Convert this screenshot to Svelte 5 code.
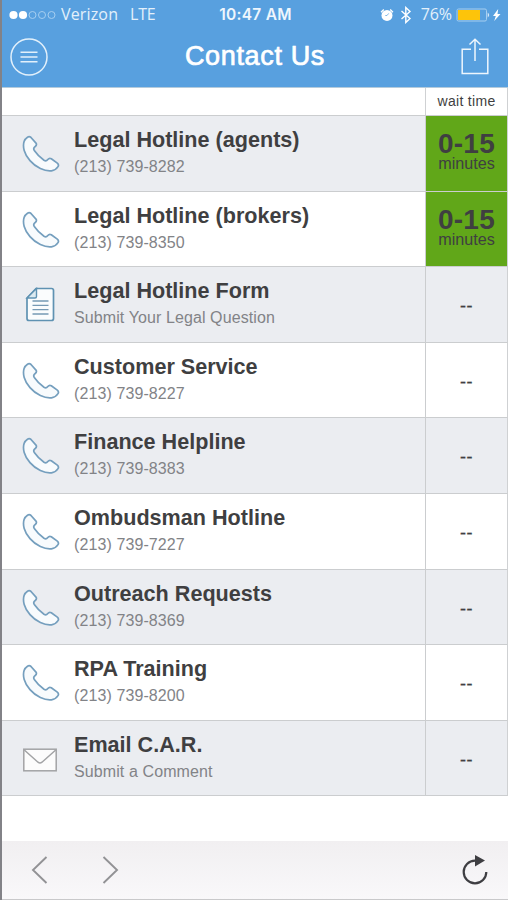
<script>
  const rows = [
    { title: 'Legal Hotline (agents)', sub: '(213) 739-8282', icon: 'phone', wait: '0-15' },
    { title: 'Legal Hotline (brokers)', sub: '(213) 739-8350', icon: 'phone', wait: '0-15' },
    { title: 'Legal Hotline Form', sub: 'Submit Your Legal Question', icon: 'form' },
    { title: 'Customer Service', sub: '(213) 739-8227', icon: 'phone' },
    { title: 'Finance Helpline', sub: '(213) 739-8383', icon: 'phone' },
    { title: 'Ombudsman Hotline', sub: '(213) 739-7227', icon: 'phone' },
    { title: 'Outreach Requests', sub: '(213) 739-8369', icon: 'phone' },
    { title: 'RPA Training', sub: '(213) 739-8200', icon: 'phone' },
    { title: 'Email C.A.R.', sub: 'Submit a Comment', icon: 'mail' }
  ];
</script>

<div class="screen">
  <header>
    <div class="status">
      <div class="left">
        <svg class="signal" width="48" height="10" viewBox="0 0 48 10">
          <circle cx="4.5" cy="5" r="4.1" fill="#fff" />
          <circle cx="14" cy="5" r="4.1" fill="#fff" />
          <g fill="none" stroke="#a5cef0" stroke-width="1">
            <circle cx="23.5" cy="5" r="3.5" />
            <circle cx="33" cy="5" r="3.5" />
            <circle cx="42.5" cy="5" r="3.5" />
          </g>
        </svg>
        <span class="carrier">Verizon</span>
        <span class="net">LTE</span>
      </div>
      <span class="time">10:47 AM</span>
      <div class="right">
        <svg width="14" height="14" viewBox="0 0 14 14">
          <circle cx="7" cy="7.4" r="5.5" fill="#fff" />
          <path d="M1 4.2L3.8 1.6M13 4.2L10.2 1.6" stroke="#fff" stroke-width="1.3" />
          <path d="M5.3 7.5H7L8.7 5.4" fill="none" stroke="#76b1e4" stroke-width=".9" />
        </svg>
        <svg class="bt" width="12" height="18" viewBox="0 0 12 18">
          <path d="M1.5 5L10 12.6L5.8 16.5V1.5L10 5.4L1.5 13" fill="none" stroke="#fff" stroke-width="1.4" />
        </svg>
        <span class="pct">76%</span>
        <svg width="46" height="14" viewBox="0 0 46 14">
          <rect x="1" y="1" width="29.5" height="12" rx="1.5" fill="none" stroke="#a5cef0" />
          <rect x="2" y="2" width="22" height="10" fill="#fdc40a" />
          <path d="M31.7 4.5q3 2.5 0 5z" fill="#d5e8f8" />
          <path d="M42.2 1L37 8h2.8l-1.6 5L44.5 6h-3z" fill="#fff" />
        </svg>
      </div>
    </div>
    <div class="nav">
      <svg class="menu" width="38" height="38" viewBox="0 0 38 38" fill="none" stroke="#e2f0fb">
        <circle cx="19" cy="19" r="18" stroke-width="1.5" />
        <path d="M10.5 14.2h17M10.5 19h17M10.5 23.8h17" stroke-width="1.6" />
      </svg>
      <h1>Contact Us</h1>
      <svg class="share" width="28" height="38" viewBox="0 0 28 38" fill="none" stroke="#eef6fd" stroke-width="1.5">
        <path d="M10 11.2H1.2V35.6H26.8V11.2H18M14 23V1.5M8.5 6.5L14 1.2L19.5 6.5" />
      </svg>
    </div>
  </header>

  <main>
    <div class="head"><span></span><span class="label">wait time</span></div>
    {#each rows as row}
      <div class="row">
        <div class="contact">
          <div class="icon">
            {#if row.icon === 'phone'}
              <svg class="phone" width="38" height="38" viewBox="0 0 38 38">
                <path d="M5.5 2.2Q7.3 1 9 2.5L14.2 8.4Q15 10 13.2 11.5Q10.8 13.3 12.3 15.5Q16.2 21.2 22 25.3Q24.2 26.7 25.8 24.5Q27.3 22.6 29.3 23.7L35.3 28.1Q37.2 29.7 36 31.6Q33.8 35.2 29.5 35.8C22.5 36.5 14 32.5 8 25.6C2 19 .5 11.5 2.1 6.5Q3 3.8 5.5 2.2Z" fill="#f8fbfd" stroke="#759fbe" stroke-width="1.7" stroke-linejoin="round" />
              </svg>
            {:else if row.icon === 'form'}
              <svg class="form" width="30" height="36" viewBox="0 0 30 36" fill="none" stroke="#5f92b2">
                <path d="M11 1.5H26.5Q28.5 1.5 28.5 3.5V31.5Q28.5 33.5 26.5 33.5H4Q2 33.5 2 31.5V11Z" fill="#fafcfd" stroke-width="1.7" />
                <path d="M11.5 1.5V9.5Q11.5 11 10 11H2Z" fill="#dceaf0" stroke-width="1.4" />
                <path d="M7.5 14h16M7.5 18.3h16M7.5 22.6h16M7.5 27h16" stroke="#7699b4" stroke-width="1.3" />
              </svg>
            {:else}
              <svg class="mail" width="34" height="24" viewBox="0 0 34 24" fill="#fcfcfc" stroke="#a2a3a5" stroke-width="1.5">
                <rect x=".8" y="1.2" width="32.4" height="21.6" />
                <path d="M1.3 2L15 14.2Q17 15.7 19 14.2L32.7 2" />
              </svg>
            {/if}
          </div>
          <div class="text">
            <div class="title">{row.title}</div>
            <div class="sub">{row.sub}</div>
          </div>
        </div>
        <div class="wait" class:green={row.wait}>
          {#if row.wait}
            <b>{row.wait}</b><span>minutes</span>
          {:else}
            <span class="none">--</span>
          {/if}
        </div>
      </div>
    {/each}
  </main>

  <footer>
    <svg class="prev" width="17" height="28" viewBox="0 0 17 28"><path d="M15.5 1L2 14L15.5 27" /></svg>
    <svg class="next" width="17" height="28" viewBox="0 0 17 28"><path d="M1.5 1L15 14L1.5 27" /></svg>
    <svg class="reload" width="26" height="30" viewBox="0 0 26 30">
      <path d="M24.3 17A11.3 11.3 0 1 1 13 5.7H15" fill="none" stroke="#3e3e42" stroke-width="2.2" />
      <path d="M13 0L23 5.6L13 11.5Z" fill="#3e3e42" />
    </svg>
  </footer>
</div>

<style>
  .screen {
    box-sizing: border-box;
    width: 508px;
    height: 900px;
    display: flex;
    flex-direction: column;
    overflow: hidden;
    border-left: 2px solid #828287;
    background: #fff;
    font-family: "Liberation Sans", Arial, sans-serif;
    color: #3f3f41;
  }
  svg { display: block; flex: none; }
  header {
    box-sizing: border-box;
    height: 88px;
    flex: none;
    margin-left: -2px;
    background: #58a0df;
    border-left: 2px solid #4c86bd;
    border-bottom: 1px solid #b4cbdc;
    color: #fff;
  }
  .status {
    display: grid;
    grid-template-columns: 1fr auto 1fr;
    align-items: center;
    height: 29px;
    padding: 0 6px 0 7px;
  }
  .left, .right { display: flex; align-items: center; }
  .right { justify-content: flex-end; }
  .carrier, .net, .pct { font: 16px/26px "Open Sans", sans-serif; color: #e3f0fb; }
  .left span, .pct { margin-top: -1px; }
  .carrier { margin-left: 4px; letter-spacing: .15px; }
  .net { margin-left: 12px; letter-spacing: -.3px; }
  .time { font: 600 15.5px/28px Inter, sans-serif; letter-spacing: .25px; color: #eef6fd; }
  .bt { margin-left: 6px; }
  .pct { margin-left: 9px; margin-right: 4px; letter-spacing: -.1px; }
  .nav {
    display: flex;
    justify-content: space-between;
    align-items: center;
    height: 56px;
    padding: 0 19px 0 8px;
  }
  h1 {
    margin: -2px 0 0;
    padding-left: 1px;
    font-size: 27px;
    line-height: 32px;
    font-weight: 400;
    letter-spacing: .65px;
    -webkit-text-stroke: .7px #fff;
  }
  .head, .row { display: grid; grid-template-columns: 1fr 82px; border-right: 1px solid #cfd1d3; }
  .head { height: 27px; }
  .label {
    border-left: 1px solid #cfd1d3;
    text-align: center;
    font-size: 14px;
    line-height: 26px;
    letter-spacing: .3px;
  }
  .row {
    box-sizing: border-box;
    height: 75.6px;
    border-top: 1px solid #cbcdcf;
  }
  .row:last-child { height: 76.6px; border-bottom: 1px solid #cbcdcf; }
  .row:nth-child(even) { background: #ebedf1; }
  .contact { display: flex; }
  .icon { width: 72px; flex: none; }
  .phone { margin: 19px 0 0 20px; }
  .form { margin: 20px 0 0 23px; }
  .mail { margin: 27px 0 0 21px; }
  .title { margin-top: 11px; font-size: 21.6px; line-height: 26px; font-weight: 700; white-space: nowrap; }
  .sub { margin-top: 4px; font-size: 16px; line-height: 20px; letter-spacing: .1px; color: #828387; }
  .wait {
    display: flex;
    flex-direction: column;
    align-items: center;
    border-left: 1px solid #cbcdcf;
  }
  .green { background: #61a719; }
  .wait b { margin-top: 17px; font-size: 28px; line-height: 22px; letter-spacing: .3px; }
  .wait span { font-size: 16.2px; line-height: 16px; }
  .wait .none { margin-top: 29px; font-size: 18px; line-height: 20px; letter-spacing: .5px; -webkit-text-stroke: .3px; }
  footer {
    display: flex;
    align-items: center;
    height: 58px;
    margin-top: auto;
    border-bottom: 1px solid #c9c9cb;
    background: linear-gradient(#f1eff1, #f9f8fa);
    padding: 0 20px 0 29px;
  }
  .prev, .next { fill: none; stroke: #929295; stroke-width: 1.9; }
  .next { margin-left: 54px; }
  .reload { margin-left: auto; }
</style>
